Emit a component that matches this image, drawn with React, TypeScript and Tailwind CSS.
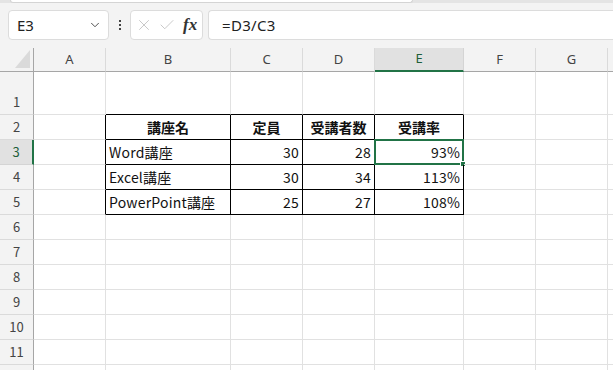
import { ChevronDown, X, Check } from 'lucide-react';

const cols = [
  { key: 'A', w: 'w-[72px]' },
  { key: 'B', w: 'w-[125px]' },
  { key: 'C', w: 'w-[72px]' },
  { key: 'D', w: 'w-[72px]' },
  { key: 'E', w: 'w-[89px]' },
  { key: 'F', w: 'w-[72px]' },
  { key: 'G', w: 'w-[72px]' },
];

type Cell = { text: string; align?: 'left' | 'right' | 'center'; bold?: boolean };

const table: Record<number, Cell[]> = {
  2: [
    { text: '講座名', align: 'center', bold: true },
    { text: '定員', align: 'center', bold: true },
    { text: '受講者数', align: 'center', bold: true },
    { text: '受講率', align: 'center', bold: true },
  ],
  3: [{ text: 'Word講座' }, { text: '30', align: 'right' }, { text: '28', align: 'right' }, { text: '93%', align: 'right' }],
  4: [{ text: 'Excel講座' }, { text: '30', align: 'right' }, { text: '34', align: 'right' }, { text: '113%', align: 'right' }],
  5: [{ text: 'PowerPoint講座' }, { text: '25', align: 'right' }, { text: '27', align: 'right' }, { text: '108%', align: 'right' }],
};

const rows = [1, 2, 3, 4, 5, 6, 7, 8, 9, 10, 11, 12];

function FormulaBar() {
  return (
    <div className="h-[40px] bg-[#f3f3f3] relative">
      {/* ribbon edge */}
      <div className="absolute top-0 left-0 right-0 h-[3px] bg-[#e4e4e4]" />
      <div className="absolute top-0 left-[10px] right-[200px] h-[3px] bg-white border-b border-x border-[#d4d4d4] rounded-b-md" />
      <div className="flex items-start pt-[10px] h-full">
        <div className="ml-[8px] w-[101px] h-[30px] bg-white border border-[#dcdcdc] rounded-[4px] flex items-center pl-[8px] pr-[6px] text-[15px] text-[#222]">
          <span className="flex-1">E3</span>
          <ChevronDown size={14} strokeWidth={1.6} className="text-[#444]" />
        </div>
        <div className="w-[21px] h-[30px] flex flex-col items-center justify-center gap-[2px]">
          <span className="w-[2px] h-[2px] bg-[#444]" />
          <span className="w-[2px] h-[2px] bg-[#444]" />
          <span className="w-[2px] h-[2px] bg-[#444]" />
        </div>
        <div className="w-[73px] h-[30px] bg-white border border-[#dcdcdc] rounded-[4px] flex items-center pl-[4px] gap-[5px]">
          <X size={18} strokeWidth={1.1} className="text-[#bdbdbd]" />
          <Check size={18} strokeWidth={1.1} className="text-[#bdbdbd]" />
          <span className="ml-[2px] text-[17px] italic font-bold text-[#333] [font-family:'Liberation_Serif',serif]">fx</span>
        </div>
        <div className="ml-[5px] flex-1 h-[30px] bg-white border border-r-0 border-[#dcdcdc] rounded-l-[4px] flex items-center pl-[13px] text-[15px] tracking-[0.3px] text-[#222]">
          =D3/C3
        </div>
      </div>
    </div>
  );
}

function ColumnHeader() {
  return (
    <div className="h-[32px] bg-[#f3f3f3] flex items-end">
      <div className="w-[34px] h-[24px] border-b border-r border-[#a6a6a6] relative">
        <div className="absolute left-[15px] top-[2px] w-0 h-0 border-l-[15px] border-l-transparent border-b-[18px] border-b-[#dadada]" />
      </div>
      {cols.map((c) =>
        c.key === 'E' ? (
          <div
            key={c.key}
            className={`${c.w} h-[24px] bg-[#e1e1e1] border-b-2 border-b-[#217346] border-r border-r-[#d4d4d4] flex items-center justify-center text-[13px] text-[#1e5f3a]`}
          >
            {c.key}
          </div>
        ) : (
          <div
            key={c.key}
            className={`${c.w} h-[24px] border-b border-b-[#a6a6a6] border-r border-r-[#dadada] flex items-center justify-center text-[13px] text-[#444]`}
          >
            {c.key}
          </div>
        )
      )}
      <div className="flex-1 h-[24px] border-b border-[#a6a6a6]" />
    </div>
  );
}

function SheetRow({ r }: { r: number }) {
  const h = r === 1 ? 'h-[43px]' : 'h-[25px]';
  const selected = r === 3;
  const inTable = r >= 2 && r <= 5;
  return (
    <div className={`flex ${h}`}>
      <div
        className={
          selected
            ? 'w-[34px] bg-[#e1e1e1] border-r-2 border-r-[#217346] border-b border-b-[#d4d4d4] flex items-end justify-center pb-[3px] text-[13px] text-[#1e5f3a]'
            : 'w-[34px] bg-[#f3f3f3] border-r border-r-[#a6a6a6] border-b border-b-[#dadada] flex items-end justify-center pb-[3px] text-[13px] text-[#444]'
        }
      >
        {r < 12 ? r : null}
      </div>
      {cols.map((c, i) => {
        const tIdx = i - 1;
        const cell = inTable && tIdx >= 0 && tIdx < 4 ? table[r][tIdx] : null;
        const blackRight = inTable && i >= 0 && i <= 4;
        const blackBottom = (r === 1 || inTable) && i >= 1 && i <= 4;
        const cls = [
          c.w,
          'relative border-r border-b',
          blackRight ? 'border-r-black' : 'border-r-[#e1e1e1]',
          blackBottom ? 'border-b-black' : 'border-b-[#e1e1e1]',
          'flex items-end pb-[1px] px-[3px] text-[14px] text-[#111] whitespace-nowrap',
          cell?.bold ? 'font-bold' : 'font-normal',
          cell?.align === 'right' ? 'justify-end' : cell?.align === 'center' ? 'justify-center' : 'justify-start',
        ].join(' ');
        return (
          <div key={c.key} className={cls}>
            <span className={cell?.bold ? '' : 'tracking-[0.2px]'}>{cell?.text}</span>
            {selected && c.key === 'E' && (
              <div className="absolute -left-px -top-px -right-px -bottom-px border-2 border-[#217346]">
                <div className="absolute -right-[4px] -bottom-[4px] w-[6px] h-[6px] bg-[#217346] border border-white" />
              </div>
            )}
          </div>
        );
      })}
      <div className="flex-1 border-b border-[#e1e1e1]" />
    </div>
  );
}

export default function App() {
  return (
    <div className="w-[613px] h-[370px] overflow-hidden bg-white [font-family:'Noto_Sans','Noto_Sans_CJK_JP',sans-serif]">
      <FormulaBar />
      <ColumnHeader />
      <div className="[font-family:'Noto_Sans_CJK_JP',sans-serif]">
        {rows.map((r) => (
          <SheetRow key={r} r={r} />
        ))}
      </div>
    </div>
  );
}
